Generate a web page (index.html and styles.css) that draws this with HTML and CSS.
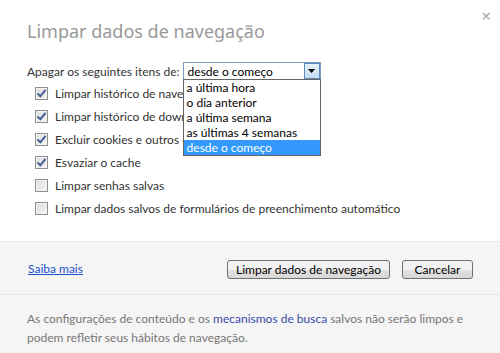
FILE: index.html
```html
<!DOCTYPE html>
<html>
<head>
<meta charset="UTF-8">
<title>Limpar dados de navegação</title>
<link rel="stylesheet" href="styles.css">
</head>
<body>
<div class="dialog">
  <span class="close">&times;</span>
  <div class="main">
    <h1 class="title">Limpar dados de navegação</h1>
    <div class="period">
      <span>Apagar os seguintes itens de:</span>
      <div class="select">
        <div class="select-box">
          <span>desde o começo</span>
          <span class="select-btn">
            <svg width="7" height="4" viewBox="0 0 7 4"><path d="M0 0h7L3.5 4z" fill="#000"/></svg>
          </span>
        </div>
        <ul class="select-list">
          <li>a última hora</li>
          <li>o dia anterior</li>
          <li>a última semana</li>
          <li>as últimas 4 semanas</li>
          <li class="selected">desde o começo</li>
        </ul>
      </div>
    </div>
    <div class="options">
      <label class="opt"><span class="check on"></span>Limpar histórico de navegação</label>
      <label class="opt"><span class="check on"></span>Limpar histórico de downloads</label>
      <label class="opt"><span class="check on"></span>Excluir cookies e outros dados de site e de plug-in</label>
      <label class="opt"><span class="check on"></span>Esvaziar o cache</label>
      <label class="opt"><span class="check"></span>Limpar senhas salvas</label>
      <label class="opt"><span class="check"></span>Limpar dados salvos de formulários de preenchimento automático</label>
    </div>
  </div>
  <div class="actions">
    <a href="#" class="more">Saiba mais</a>
    <div class="buttons">
      <button class="btn">Limpar dados de navegação</button>
      <button class="btn">Cancelar</button>
    </div>
  </div>
  <div class="note">
    <p>As configurações de conteúdo e os <a href="#">mecanismos de busca</a> salvos não serão limpos e</p>
    <p>podem refletir seus hábitos de navegação.</p>
  </div>
</div>
</body>
</html>
```

FILE: styles.css
```css
* {
    margin: 0;
    padding: 0;
    box-sizing: border-box;
}
body {
    background: #fff;
    font-family: Lato, "Noto Sans", sans-serif;
    font-size: 12px;
    color: #333;
}
.dialog {
    position: relative;
    width: 500px;
    height: 353px;
    background: #fff;
    display: flex;
    flex-direction: column;
}
.close {
    position: absolute;
    top: 4px;
    right: 9px;
    font-family: "Noto Sans", sans-serif;
    font-size: 17px;
    color: #aaa;
}
.main {
    flex: none;
    padding: 18px 27px 0;
    height: 241px;
}
.title {
    font-family: "Noto Sans", sans-serif;
    font-size: 18px;
    font-weight: normal;
    color: #999;
    line-height: 26px;
}
.period {
    display: flex;
    align-items: center;
    gap: 3px;
    margin-top: 18px;
}
.select {
    position: relative;
}
.select-box {
    width: 138px;
    height: 18px;
    border: 1px solid #7a9cc8;
    display: flex;
    justify-content: space-between;
    align-items: center;
    padding-left: 4px;
    color: #000;
}
.select-btn {
    width: 16px;
    height: 16px;
    background: linear-gradient(#e6f1fb, #c4dcf2);
    border: 1px solid #5e8bbd;
    display: flex;
    align-items: center;
    justify-content: center;
}
.select-list {
    position: absolute;
    top: 17px;
    left: 0;
    width: 138px;
    list-style: none;
    background: #fff;
    border: 1px solid #646464;
    z-index: 2;
    color: #000;
}
.select-list li {
    height: 15px;
    line-height: 15px;
    padding-left: 3px;
}
.select-list li.selected {
    background: #3399ff;
    color: #fff;
}
.options {
    padding-left: 8px;
    margin-top: 2px;
}
.opt {
    display: flex;
    align-items: center;
    gap: 7px;
    height: 23px;
    color: #333;
    white-space: nowrap;
}
.check {
    width: 13px;
    height: 13px;
    flex: none;
    border: 1px solid #8e8f8f;
    background: linear-gradient(135deg, #dcdcdc, #f6f6f6);
    box-shadow: inset 0 0 0 1px #f4f4f4;
    position: relative;
}
.check.on::after {
    content: "";
    position: absolute;
    left: 3px;
    top: 0px;
    width: 3px;
    height: 7px;
    border: solid #4a5f97;
    border-width: 0 2px 2px 0;
    transform: rotate(40deg);
}
.actions {
    flex: none;
    height: 54px;
    background: #f5f5f5;
    border-top: 1px solid #e6e6e6;
    border-bottom: 1px solid #e6e6e6;
    display: flex;
    align-items: center;
    justify-content: space-between;
    padding: 0 27px 0 28px;
}
.more {
    color: #1a4fcf;
}
.buttons {
    display: flex;
    gap: 12px;
    margin-top: 3px;
}
.btn {
    font-family: inherit;
    font-size: 12px;
    height: 19px;
    padding: 0;
    white-space: nowrap;
    border: 1px solid #707070;
    border-radius: 3px;
    background: linear-gradient(#f2f2f2 50%, #e2e2e2 50%, #d8d8d8);
    color: #000;
}
.btn:first-child {
    width: 163px;
}
.btn:last-child {
    width: 71px;
}
.note {
    flex: 1;
    background: #f5f5f5;
    padding: 14px 27px 0;
    color: #777;
    line-height: 19px;
    white-space: nowrap;
}
.note a {
    color: #3b4ba8;
    text-decoration: none;
}
```
